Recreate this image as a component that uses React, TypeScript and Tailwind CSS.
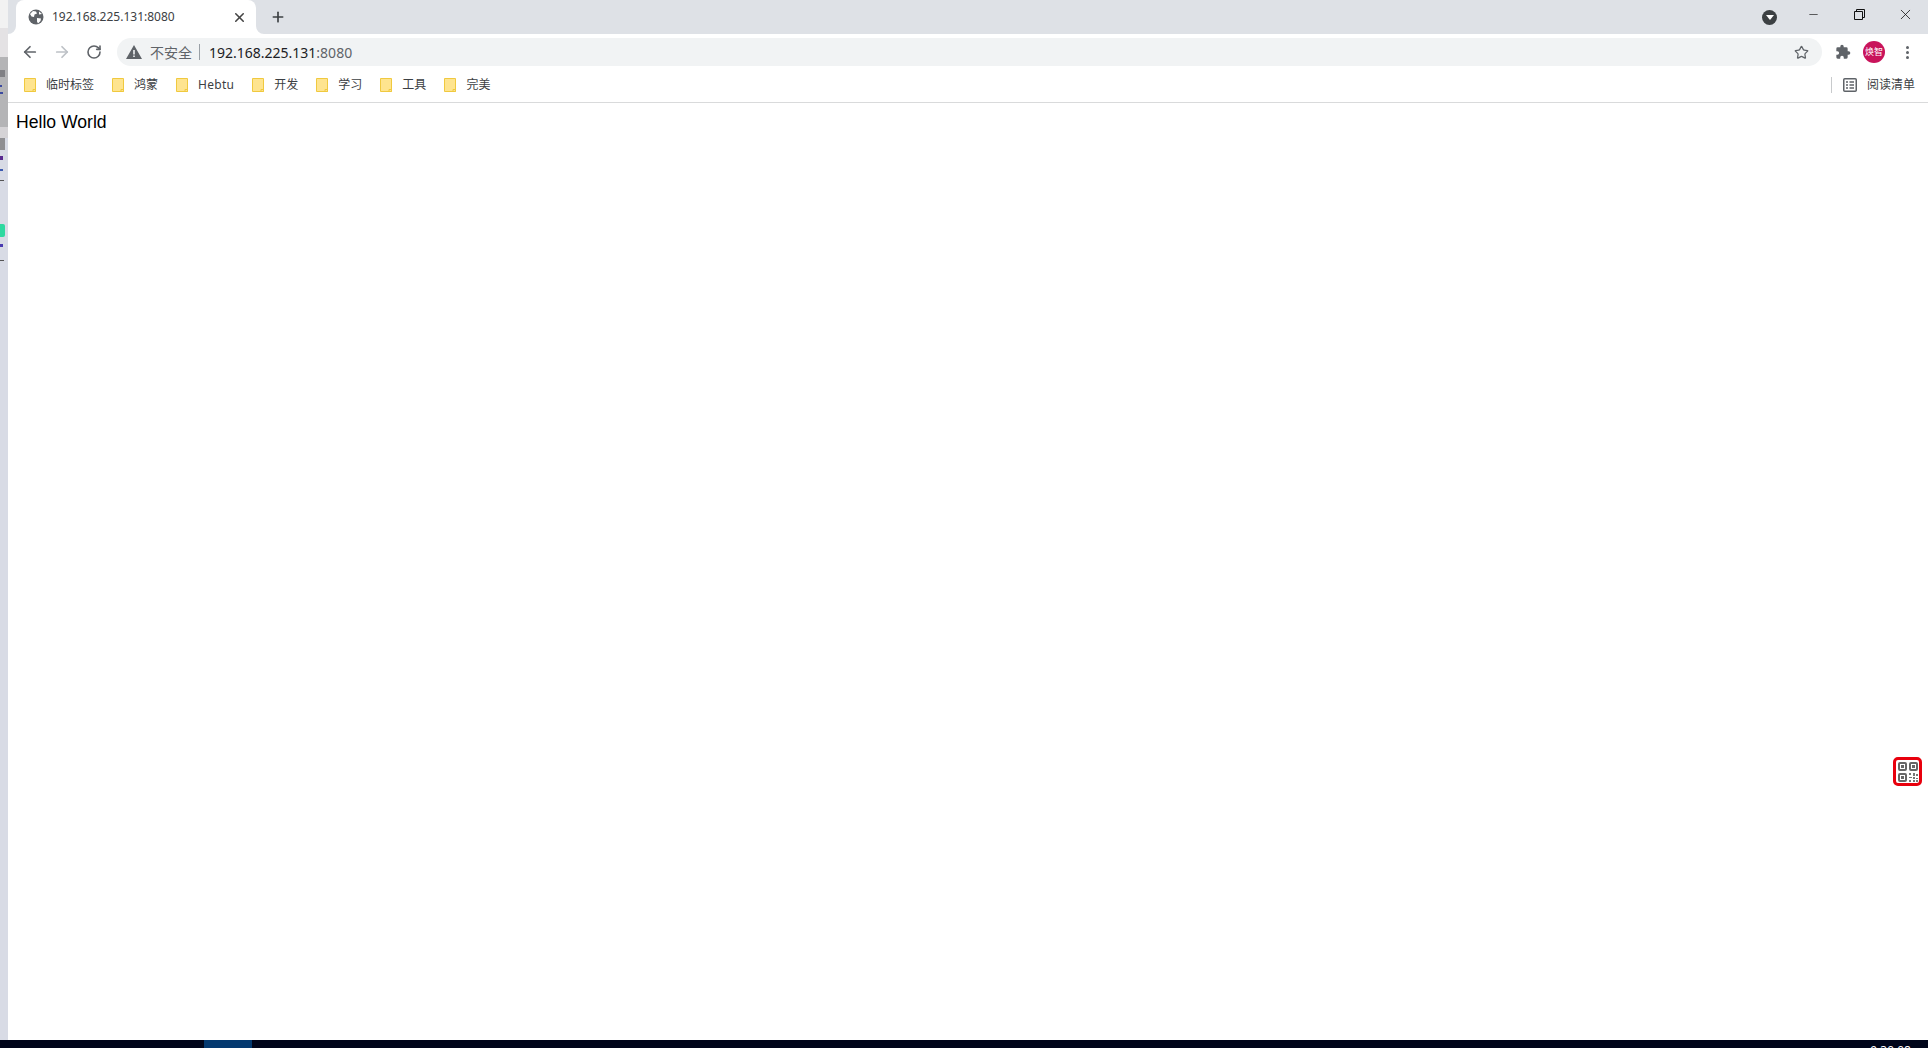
import React from 'react';
import { ArrowLeft, ArrowRight, RotateCw, Plus, X, Minus, Star } from 'lucide-react';

const bookmarks = ['临时标签', '鸿蒙', 'Hebtu', '开发', '学习', '工具', '完美'];

function Folder() {
  return (
    <svg width="12" height="14" viewBox="0 0 12 14" className="shrink-0">
      <path d="M.5.5h11v13H.5z" fill="#fee48f" stroke="#f0c93f" />
      <path d="M9 11.500h2.500v2H9z" fill="#fee48f" stroke="#f0c93f" />
    </svg>
  );
}

function Globe() {
  return (
    <svg width="16" height="16" viewBox="0 0 16 16">
      <circle cx="8" cy="8" r="7.500" fill="#5f6368" />
      <path d="M2 5l3-3 3 .5 1 2-2.500 1L6 8 3.500 7.500zM9 9l4 .5-.5 2.500-2.500 2.500-1-2zM11 2.500L14 5l-3 .5z" fill="#fff" />
    </svg>
  );
}

function Restore() {
  return (
    <svg width="11" height="11" viewBox="0 0 11 11" fill="none" stroke="#111" strokeWidth="1">
      <path d="M.5 2.500h8v8h-8z" />
      <path d="M2.500 2.500v-2h8v8h-2" />
    </svg>
  );
}

function Puzzle() {
  return (
    <svg width="16" height="16" viewBox="0 0 24 24" fill="#5f6368">
      <path d="M20.500 11H19V7a2 2 0 0 0-2-2h-4V3.500a2.500 2.500 0 0 0-5 0V5H4a2 2 0 0 0-2 2v3.800h1.500a2.700 2.700 0 0 1 0 5.400H2V20a2 2 0 0 0 2 2h3.800v-1.500a2.700 2.700 0 0 1 5.400 0V22H17a2 2 0 0 0 2-2v-4h1.500a2.500 2.500 0 0 0 0-5z" />
    </svg>
  );
}

function ReadingList() {
  return (
    <svg width="14" height="14" viewBox="0 0 14 14" fill="none" stroke="#5f6368">
      <rect x=".75" y=".75" width="12.500" height="12.500" rx="1" strokeWidth="1.500" />
      <path d="M3 4h2M3 7h2M3 10h2M6.500 4h4.500M6.500 7h4.500M6.500 10h4.500" strokeWidth="1.300" />
    </svg>
  );
}

function QrButton() {
  const finder = 'w-[9px] h-[9px] border-2 border-[#666] rounded-[2px] flex items-center justify-center';
  const dot = <div className="w-[3px] h-[3px] bg-[#666]" />;
  return (
    <div className="absolute right-[6px] top-[757px] w-[29px] h-[29px] border-[3px] border-[#e8000d] rounded-[5px] bg-white grid grid-cols-2 gap-[2px] p-[2px]">
      <div className={finder}>{dot}</div>
      <div className={finder}>{dot}</div>
      <div className={finder}>{dot}</div>
      <svg width="9" height="9" viewBox="0 0 9 9" fill="#777">
        <path d="M0 0h2v2H0zM4 0h2v3H4zM7 1h2v2H7zM0 4h3v1H0zM4 4h2v2H4zM7 5h2v1H7zM0 7h2v2H0zM4 7h2v2H4zM7 7h2v2H7z" />
      </svg>
    </div>
  );
}

// sliver of another window showing at the left edge
function LeftSliver() {
  return (
    <div className="w-2 shrink-0 flex flex-col bg-[#d8dbe5]">
      <div className="h-[28px] bg-[#f2f2f2]" />
      <div className="h-[29px] bg-[#e4e2e4]" />
      <div className="h-[70px] bg-[#b4b4b6] flex flex-col">
        <div className="mt-[13px] h-[7px] w-[5px] bg-[#808084]" />
        <div className="mt-[8px] h-[2px] w-[2px] bg-[#3c4aa0]" />
        <div className="mt-[5px] h-[2px] w-[3px] bg-[#3c4aa0]" />
      </div>
      <div className="h-[11px] bg-[#d5d3d6]" />
      <div className="h-[12px] w-[5px] bg-[#8f8f92]" />
      <div className="h-[6px]" />
      <div className="h-[4px] w-[3px] bg-[#5a2a90]" />
      <div className="h-[9px]" />
      <div className="h-[2px] w-[3px] bg-[#3c5ab0]" />
      <div className="h-[9px]" />
      <div className="h-[1px] w-[4px] bg-[#555]" />
      <div className="h-[43px]" />
      <div className="h-[13px] w-[5px] bg-[#2ed9a0] rounded-r-[2px]" />
      <div className="h-[7px]" />
      <div className="h-[3px] w-[3px] bg-[#4a3ab0]" />
      <div className="h-[13px]" />
      <div className="h-[1px] w-[4px] bg-[#555]" />
    </div>
  );
}

export default function App() {
  return (
    <div className="relative h-screen flex flex-col overflow-hidden bg-white font-['Noto_Sans','Noto_Sans_CJK_SC',sans-serif]">
      <div className="flex flex-1 min-h-0">
        <LeftSliver />

        <div className="flex-1 min-w-0 flex flex-col">
          {/* tab strip */}
          <div className="h-[34px] shrink-0 bg-[#dee1e6] flex items-end pl-2">
            <div className="relative w-[240px] h-[34px] bg-white rounded-t-[8px] flex items-center pl-[12px] pr-[9px]">
              <svg width="8" height="8" viewBox="0 0 8 8" className="absolute -left-2 bottom-0" fill="#fff">
                <path d="M8 0v8H0a8 8 0 0 0 8-8z" />
              </svg>
              <svg width="8" height="8" viewBox="0 0 8 8" className="absolute -right-2 bottom-0" fill="#fff">
                <path d="M0 0v8h8a8 8 0 0 1-8-8z" />
              </svg>
              <Globe />
              <span className="ml-[8px] text-[12px] text-[#3c4043] flex-1">192.168.225.131:8080</span>
              <X size={15} strokeWidth={2.500} className="text-[#444]" />
            </div>
            <div className="h-[34px] ml-[14px] flex items-center">
              <Plus size={16} strokeWidth={2.500} className="text-[#3c4043]" />
            </div>
            <div className="ml-auto h-[34px] flex items-center">
              <div className="w-[15px] h-[15px] rounded-full bg-[#3c4043] flex items-center justify-center mr-[13px]">
                <div className="w-0 h-0 border-x-[4px] border-x-transparent border-t-[5px] border-t-white" />
              </div>
              <div className="w-[46px] h-[28px] flex items-center justify-center -mt-[6px]">
                <Minus size={13} strokeWidth={1.200} className="text-[#111]" />
              </div>
              <div className="w-[46px] h-[28px] flex items-center justify-center -mt-[6px]">
                <Restore />
              </div>
              <div className="w-[46px] h-[28px] flex items-center justify-center -mt-[6px]">
                <X size={17} strokeWidth={1.100} className="text-[#111]" />
              </div>
            </div>
          </div>

          {/* toolbar */}
          <div className="h-[34px] shrink-0 flex items-center pt-[2px] pl-[13px] pr-[17px]">
            <ArrowLeft size={18} strokeWidth={2.300} className="text-[#5f6368]" />
            <ArrowRight size={18} strokeWidth={2.300} className="text-[#bdc1c6] ml-[14px]" />
            <RotateCw size={16} strokeWidth={2.400} className="text-[#5f6368] ml-[15px]" />
            <div className="ml-[15px] flex-1 h-[28px] rounded-full bg-[#f1f3f4] flex items-center pl-[9px] pr-[13px]">
              <svg width="16" height="14" viewBox="0 0 16 14" fill="#5f6368">
                <path d="M8 0l8 14H0zM7.200 5v4.500h1.600V5zm0 5.500V12h1.600v-1.500z" fillRule="evenodd" />
              </svg>
              <span className="ml-[8px] text-[14px] text-[#5f6368]">不安全</span>
              <div className="ml-[7px] w-px h-[16px] bg-[#9aa0a6]" />
              <span className="ml-[9px] text-[14px] text-[#202124]">192.168.225.131<span className="text-[#5f6368]">:8080</span></span>
              <Star size={15} strokeWidth={2} className="ml-auto text-[#5f6368]" />
            </div>
            <div className="ml-[12px] w-[18px] flex justify-center"><Puzzle /></div>
            <div className="ml-[11px] w-[22px] h-[22px] rounded-full bg-[#c9145b] text-white text-[9px] flex items-center justify-center">焕智</div>
            <div className="ml-[18px] flex flex-col gap-[2px] items-center w-[8px]">
              <div className="w-[3px] h-[3px] rounded-full bg-[#5f6368]" />
              <div className="w-[3px] h-[3px] rounded-full bg-[#5f6368]" />
              <div className="w-[3px] h-[3px] rounded-full bg-[#5f6368]" />
            </div>
          </div>

          {/* bookmarks */}
          <div className="h-[35px] shrink-0 flex items-center border-b border-[#d9dadb] pl-[16px] pr-[13px] text-[12px] text-[#3c4043]">
            {bookmarks.map((b) => (
              <div key={b} className="flex items-center gap-[10px] mr-[18px]">
                <Folder />
                <span className={b === 'Hebtu' ? 'tracking-[0.3px]' : ''}>{b}</span>
              </div>
            ))}
            <div className="ml-auto h-[16px] w-px bg-[#c8cacc]" />
            <div className="ml-[11px]"><ReadingList /></div>
            <span className="ml-[10px]">阅读清单</span>
          </div>

          <p className="pl-[8px] pt-[7px] font-['Liberation_Sans',sans-serif] text-[17.6px] text-black leading-[24px]">Hello World</p>
        </div>
      </div>

      {/* taskbar, cut off at the bottom */}
      <div className="h-2 shrink-0 bg-[#00051a] flex overflow-hidden">
        <div className="ml-[204px] w-[48px] bg-[#04396f]" />
        <span className="ml-auto mr-[17px] pt-[4px] text-[12px] leading-[14px] text-white">9:30:08</span>
      </div>

      <QrButton />
    </div>
  );
}
